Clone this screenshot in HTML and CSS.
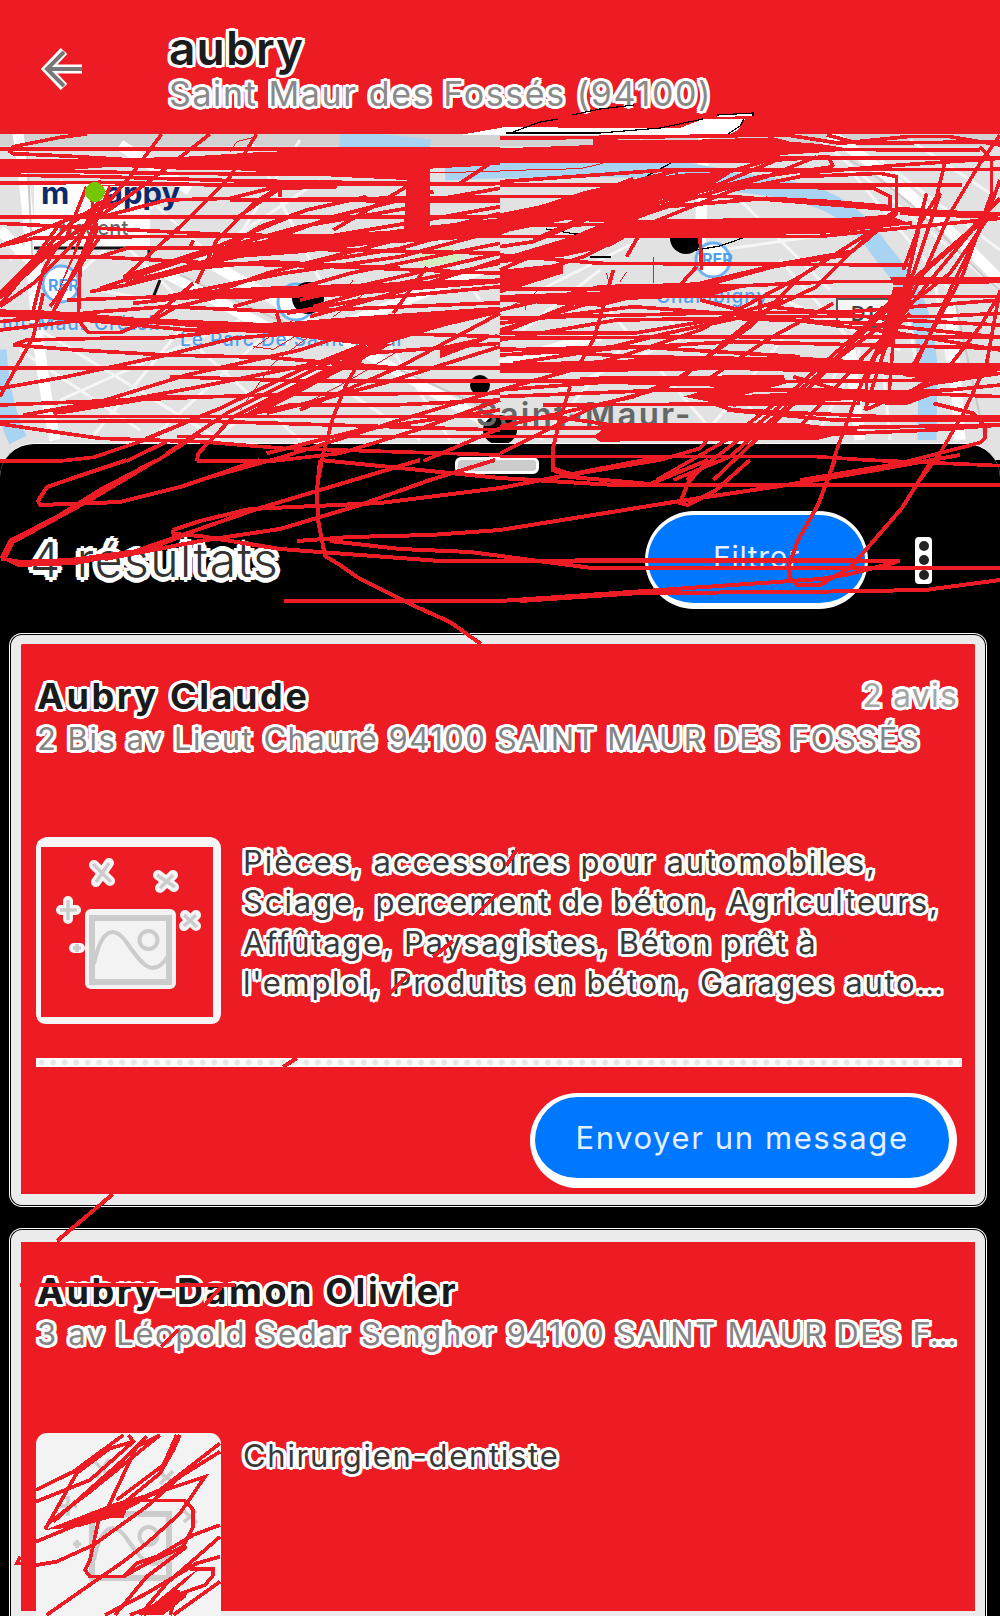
FILE: index.html
```html
<!DOCTYPE html>
<html lang="fr">
<head>
<meta charset="utf-8">
<title>aubry – Saint Maur des Fossés</title>
<link rel="stylesheet" href="styles.css">
</head>
<body>
<div class="screen">
  <header class="topbar">
    <svg class="back" viewBox="0 0 44 44"><path class="back-halo" d="M21 4 4 22 21 40M4 22H39"/><path class="back-line" d="M21 5 4 22 21 39M4 22H39"/></svg>
    <div>
      <h1 class="query halo">aubry</h1>
      <p class="place halo">Saint Maur des Fossés (94100)</p>
    </div>
  </header>

  <svg class="map" viewBox="0 134 1000 326">
    <rect y="134" width="1000" height="326" fill="#e2e2e2"/>
    <rect y="134" width="1000" height="12" fill="#d2d2d2"/>
    <g fill="none" stroke="#f6f6f6" stroke-width="3">
      <path d="M20 350 140 430M40 330 220 440M60 400 240 320M90 440 180 330M150 440 260 340M210 440 330 360M300 440 200 350M10 260 100 180M60 290 160 200M100 290 200 310M60 180 180 300M200 260 320 180M260 300 150 200M250 140 330 300M300 140 230 250M330 380 420 440M380 330 450 440M400 180 480 300M520 300 640 240M510 340 600 270M560 390 700 330M540 440 620 350M600 300 720 440M660 310 780 440M700 440 790 330M740 200 830 290M720 250 860 230M780 260 850 340M760 290 900 350M800 440 870 310M860 350 820 430M890 440 880 330M930 440 905 300M960 440 930 250M1000 250 880 160M1000 200 910 140M850 170 950 290M820 140 1000 290M640 140 700 190"/>
    </g>
    <g fill="none" stroke="#fff" stroke-width="11">
      <path d="M18 134C35 240 30 330 55 440M0 230 70 300M120 145 190 190M160 270 290 340M205 260 500 430M500 365 600 335M704 134 700 250M830 134C900 180 960 240 1000 280M850 350 860 440M960 440 950 300M330 330 480 270"/>
    </g>
    <g fill="none" stroke="#c9c9c9" stroke-width="2"><path d="M850 160C920 200 960 260 1000 290M27 150 33 270M955 300 985 440M180 275 300 330M400 370 490 410"/></g>
    <g fill="none" stroke="#a8d3f2" stroke-width="19">
      <path d="M340 139 430 149M445 171C580 165 690 165 730 182 820 190 850 205 880 250 910 285 925 310 928 370L927 440"/>
      <path d="M-3 350C0 390 8 420 18 440"/>
    </g>
    <path d="M412 258 450 245 465 262 425 266Z" fill="#d4edbe"/>
    <rect x="34" y="184" width="116" height="65" fill="#fff" opacity=".85"/>
    <path d="M34 248H149V258M160 280 151 303" fill="none" stroke="#111" stroke-width="3"/>
    <text class="logo" x="41" y="204">m</text><text class="logo" x="105" y="204">appy</text>
    <text class="resto" x="58" y="235">Nogent</text>
    <g class="rer"><circle cx="61" cy="284" r="18"/><circle cx="296" cy="302" r="18"/><circle cx="713" cy="260" r="17"/></g>
    <text class="station bold" x="48" y="291">RER</text><text class="station bold" x="702" y="265">RER</text>
    <text class="station" x="2" y="330">int-Maur Créteil</text>
    <text class="station" x="180" y="346">Le Parc De Saint-Maur</text>
    <text class="station" x="656" y="303">Champigny</text>
    <g fill="#000"><circle cx="308" cy="298" r="16"/><circle cx="686" cy="238" r="16"/><circle cx="480" cy="385" r="10"/><ellipse cx="500" cy="430" rx="17" ry="15"/></g>
    <rect x="837" y="299" width="56" height="28" fill="#f5f5f5" stroke="#555" stroke-width="2"/>
    <text class="road" x="851" y="321">D145</text>
    <text class="town" x="476" y="426">Saint-Maur-</text>
  </svg>

  <main class="sheet">
    <div class="grip"></div>
    <div class="summary">
      <h2 class="count halo">4 résultats</h2>
      <button class="pill filter">Filtrer</button>
      <div class="more"><i></i><i></i><i></i></div>
    </div>

    <article class="card">
      <div class="card-head"><h3 class="name halo">Aubry Claude</h3><span class="reviews halo">2 avis</span></div>
      <p class="address halo">2 Bis av Lieut Chauré 94100 SAINT MAUR DES FOSSÉS</p>
      <div class="detail">
        <svg class="thumb" viewBox="0 0 185 187">
          <path fill="#f5f5f5" fill-rule="evenodd" d="M10 0H175Q185 2 185 12V177Q184 187 175 187H10Q1 187 0 177V10Q1 2 10 0ZM5 10V180H177V10Z"/>
          <g class="spark-halo"><path d="M58 28 74 44M73 26 60 45M122 38 138 50M137 38 124 51M32 64V82M25 73H40M149 78 160 89M160 78 148 89M38 111H44"/></g>
          <g class="spark"><path d="M57 27 75 45M73 26 60 45M121 38 139 50M137 38 124 51M32 63V83M24 73H41M148 78 161 90M160 78 148 89M37 111H45M41 107V115"/></g>
          <rect x="49" y="72" width="91" height="80" rx="6" fill="#f3f3f3"/>
          <g class="picture"><rect x="56" y="81" width="77" height="64"/><path d="M58 127C65 92 78 87 91 106S117 144 132 119"/><circle cx="112.500" cy="103" r="9"/></g>
        </svg>
        <p class="jobs halo"><span>Pièces, accessoires pour automobiles,</span><span>Sciage, percement de béton, Agriculteurs,</span><span class="tight">Affûtage, Paysagistes, Béton prêt à</span><span class="tight">l'emploi, Produits en béton, Garages auto…</span></p>
      </div>
      <div class="rule"></div>
      <button class="pill message">Envoyer un message</button>
    </article>

    <article class="card last">
      <div class="card-head"><h3 class="name halo">Aubry-Damon Olivier</h3></div>
      <p class="address wide halo">3 av Léopold Sedar Senghor 94100 SAINT MAUR DES F…</p>
      <div class="detail">
        <svg class="thumb" viewBox="0 0 185 187">
          <rect width="185" height="200" rx="11" fill="#f3f3f3"/>
          <g class="spark"><path d="M57 27 75 45M73 26 60 45M121 38 139 50M137 38 124 51M32 63V83M24 73H41M148 78 161 90M160 78 148 89M37 111H45M41 107V115"/></g>
          <g class="picture"><rect x="56" y="81" width="77" height="64"/><path d="M58 127C65 92 78 87 91 106S117 144 132 119"/><circle cx="112.500" cy="103" r="9"/></g>
        </svg>
        <p class="jobs halo"><span class="tight">Chirurgien-dentiste</span></p>
      </div>
    </article>
  </main>

  <!-- Freehand pen strokes drawn over the whole screen -->
  <svg class="ink" viewBox="0 0 1000 1616">
    <path fill="#fff" d="M460 135 505 127 610 128 680 128 703 119 745 119 738 130 728 135Z"/>
    <path fill="#fff" d="M717 115 753 113V116L717 117Z"/>
    <g class="thin-black"><path d="M506 133H600L660 128 703 119M513 132 540 122 558 119M572 115 600 109 634 105M717 115 753 113V116M744 119 740 126 728 134M722 139 706 144M671 163 634 183M573 208 554 218M546 229 575 234H700L754 234 720 246 690 251M590 257H611"/></g>

    <!-- left half of the map -->
    <g transform="translate(0 120) scale(.333333)">
      <path class="fill" d="M0 118 330 116 560 110 800 95 1500 84V135L1290 146 1290 230 1290 350 1210 350 1220 180 1000 170 700 150 560 150 340 140 0 165Z"/>
      <path class="fill" d="M1500 225 1100 230 690 235 690 245 1500 250ZM1500 305 1200 330 870 350 650 380 630 420 900 400 1100 375 1500 350Z"/>
      <path class="fill" d="M1500 475 1100 490 800 500 620 510 470 540 800 535 1000 530 1500 490ZM0 568 150 572 420 594 820 610 1000 595 1500 560V580L1330 620 1130 680 800 640 500 615 300 606 0 590Z"/>
      <path class="fill" d="M160 550 290 260 320 210 270 270ZM720 890 1100 680 1180 670 820 860ZM1320 715 1410 680 1500 640 1320 680Z"/>
      <path d="M260 42 180 52 40 80 30 95 40 101 200 108 400 120M0 88H1500M0 130 340 128 800 115M0 150 500 160 1250 165M0 165 300 170 700 182 1220 190M0 190 300 187 700 196 1500 190M0 292 1500 290M0 310 300 325 700 345 1300 352M0 378 100 355 400 350 1500 350M0 411 300 411 650 430 1000 440 1500 460"/>
      <path d="M485 42 390 170 210 380 100 490 0 560M630 42 440 190 270 310 130 400 0 525M770 42 690 170 540 320 370 475M260 200 200 350 60 480 0 555M330 200 240 420 160 575M270 200 290 330 240 440 235 600 265 638 360 638 450 600 580 490M300 280 170 380 130 450 100 570M330 230 200 320 60 470 0 535M300 350 210 480 150 560M180 310 100 420 0 520M350 250 200 300 0 378"/>
      <path d="M270 300 500 240 690 235 830 200M300 410 380 385 700 383 1500 400M270 515 380 495 580 445 800 425 1200 445M300 505 540 425 700 375 900 320 1250 260M370 470 650 380 920 270 1100 230M380 490 700 400 1000 290 1300 215M200 540 500 530 850 460 1200 410 1500 330M400 550 620 525 800 460 1150 370 1500 280M700 300 840 205 1010 200M590 490 650 360 760 250 840 200V230M650 400 780 320 920 270M570 380 580 360M1000 330 1220 200M800 370 980 350 1220 310 1500 260M860 440 1200 385 1500 300M900 540 1200 470 1500 400M940 560 1150 500 1500 430M460 600 530 560 700 520 1100 500M1180 580 1230 510 1280 440M860 580 1080 540 1500 500M400 480 800 390 1220 330 1500 300M930 590 1250 500 1500 420M700 560 1050 460 1500 370M1300 240 1500 205M1380 190 1500 110"/>
      <path d="M0 605 300 575 500 560 850 575 1500 548M0 630 250 600 560 630 1000 635 1500 650M40 675 80 660 300 655 500 653 700 630 840 610 830 580M40 675 230 690 500 705 800 712 1200 745 1500 745M0 745H1500M0 805 200 770 500 705 700 655 880 640M0 830 100 650 130 520M0 855 250 845 640 830 900 822 1500 820M0 890H1500M0 905 600 903 1500 930M0 912 300 955 600 965 850 985 1500 1005M70 885 300 845 560 765 900 690 1170 600M160 880 600 800 850 750 1100 700 1500 670M180 878 480 830 700 830M510 770 900 783 1500 783M440 955 660 865 900 750 1100 670M500 1000 680 880 960 740 1100 680M720 890 870 855 1180 855 1500 840M800 880 1150 790 1500 680M900 870 1200 740 1500 580M0 1023H180L280 1012 420 965 600 890M380 1023 500 965M470 1023 600 940M530 950H1500M600 1080 850 1010 1200 900 1500 810M590 1024 595 1000 700 890 1000 740M590 1024H810L1020 1000 1250 930 1500 840M800 1000 1080 930 1500 870M1270 1023 1500 925M1100 690 1040 790 1000 890 970 1000 955 1080"/>
      <path class="hair" d="M690 95 710 65 770 50M720 870 820 730 920 655M760 685 880 600M900 860 1050 780 1200 690M1000 590 1120 500M1000 560 1060 480M900 640 820 688 760 680M500 165 1500 155M300 198 1500 195"/>
    </g>

    <!-- right half of the map -->
    <g transform="translate(500 100) scale(.333333)">
      <path class="fill" d="M0 145 280 135 280 118 560 120 820 112 870 125 960 132 1075 150 840 165 780 188 0 190Z"/>
      <path class="fill" d="M0 340 200 300 400 240 560 220 700 215 620 265 480 300 420 340 400 400 330 440 190 470 0 490 0 470 200 430 350 370 200 360 0 400ZM0 510 190 490 190 520 0 580ZM400 360 700 355 1190 355 1235 372 1000 400 600 410 300 405Z"/>
      <path class="fill" d="M0 585 400 572 600 550 760 555 620 590 380 600 300 620 0 605ZM0 790 500 775 900 770 1200 790 1500 790V812L1350 850 1200 825 700 810 0 820Z"/>
      <path class="fill" d="M240 830 850 825 860 850 730 885 1000 870 1300 885 1220 915 1165 915 1050 900 700 920 550 890 650 860 240 850ZM280 1010 330 970 900 970 1075 990 950 1020 300 1025ZM1170 530H1500V550L1180 555ZM1180 560 1130 770 1180 730 1240 560Z"/>
      <path d="M0 115 500 110 860 105 1020 130 1220 110 1350 110 1500 135M0 150 800 148 1440 150M0 180 900 173 1500 174M0 245 500 210 1500 208M0 255H1385M0 290 700 290 1190 330 1500 342M0 375 1235 370M0 410H950L1500 355M0 465 300 490 1230 495M0 568 500 568 1000 545 1500 545M0 590H1500M0 655 600 640 1050 635 1500 600M0 715 700 710 1500 712M0 745 400 770 1000 780M0 765 700 725 1500 745M0 843 800 845 1350 840M0 870 400 840M0 890 500 870 1000 870 1500 890M130 915 1080 910M0 955H200L400 985 1070 990M0 985H900L1500 975M0 1010H800L1300 990 1500 975M650 915 700 930 1150 950 1500 952M680 930 1000 960 1500 960"/>
      <path d="M980 105 1075 130 1500 125M1000 200 985 170 830 180 640 260 400 350 130 460M950 170 800 230 560 300 300 390 0 480M1000 200 780 230 500 300 250 400 0 510M0 440 100 425 400 300 840 170M0 400 400 235M0 360 250 280 540 210M100 420 300 330 500 230M0 550 250 470 450 370 700 270 900 230 1140 220 1190 230V340L1100 420 1040 465 820 500 600 560 300 600 0 690M530 210V250M1190 330 1160 350 900 370M700 260 1120 265 1170 290V320L1000 305 800 295 500 320 350 370M0 700 300 580 600 550 850 490 1050 455M1180 340 1050 460 950 560 780 640 500 700 300 750 40 790M1120 390 900 530 600 690 360 770 0 870M380 470 420 400M600 410 605 510M0 630 300 560 540 555 590 500M340 510 310 620 280 720 240 790M780 600V640L550 830 400 890 0 980M900 530 750 680 500 860 280 920 0 1060M850 600 640 660 400 700 0 700M0 670 400 620 800 650 1300 650 1500 640M0 720 350 660 700 655 1100 670 1500 712M0 750 400 740 900 770M620 840 800 720 1000 610M600 600 800 650 1200 700 1500 750M800 620 1200 660 1500 675"/>
      <path d="M1335 185 1310 290 1260 370 1230 500 1180 720 1165 910M1320 280 1240 520 1150 760 1095 930M1440 140 1475 180V280L1440 380 1390 520 1320 650 1220 830M1500 105 1440 190 1350 340 1280 500 1180 690M1500 295 1400 400 1260 520 1050 720 880 870 680 1020 470 1140M1500 340 1440 370 1280 510 1150 640 960 820 740 1000 560 1140M1460 360 1350 520 1180 650 1020 770 820 970 640 1140M1450 350 1300 530 1140 730 1100 840V920M1500 240 1460 350 1360 550 1240 810M1500 570 1460 790 1390 940 1320 1060 1260 1140M1500 580 1440 680 1340 810 1170 910M1230 520 1190 620 1080 860 1010 1050 985 1140M1230 640 1100 760 900 980M1280 280 1250 400 1210 510M900 220 1200 195 1500 175M1190 325 1450 345M1200 340 1440 350 1500 340M1170 590V700M1095 930 1210 880 1300 850 1500 820M1300 910 1420 940 1455 980V1015L1440 1028 1200 1090 900 1140M0 1070H950L1100 1080 1500 1097M240 1130 160 1105V1040L180 960 210 860M630 990V1010L600 1045 480 1080 180 1130M860 920 690 1070 520 1140M880 830 1050 880 1350 870 1500 855"/>
      <path class="hair" d="M0 212 240 206 310 190M100 585 120 560M380 515 360 545M320 520 330 560M76 600V630M0 635 50 610M460 470V550"/>
    </g>

    <!-- strokes that run onto the sheet -->
    <g>
      <path d="M127 460 82 475 47 487 38 501 40 505 120 502 180 487 260 460M157 460 100 490 60 515 10 541 2 557 18 565 75 563 130 553 185 534 260 508 420 460M157 460 90 500 13 542 4 559 20 562 70 560 145 550 185 535M105 559 200 541 280 529 360 505 430 480 495 460M173 530 200 521 250 509 380 503 500 488 660 457M172 530 174 534 200 536 280 549 440 561 500 561H900M320 460 317 490 318 520 325 556 340 565 357 577 410 604 450 622 481 644M297 541 350 537 430 535 500 530 680 501 780 486 870 471 960 455M330 541 400 549 470 552 592 568H1000M284 601H500L660 590 820 579 850 574 897 562 840 560H575M520 601 640 593 800 592 925 590 1000 580M320 460 500 478 615 485H1000M553 460V470L570 477 650 484 708 460M708 460 688 483 680 503 688 505 716 490 750 460M835 460 818 505 798 540 789 565 790 578 797 585H820L850 568 870 545 902 508 932 460"/>
      <path d="M518 848 506 866M496 895 473 918M453 941 433 957M409 974 389 994M297 1058 283 1067M113 1194 57 1241"/>
      <path d="M20 1285H235M222 1286 205 1305M178 1330 161 1347"/>
      <g transform="translate(0 1180) scale(.333333)">
        <path d="M108 930 220 875 370 765M108 965 270 900 400 785 385 765M135 1048 230 880 330 805 400 785M145 1030 270 935 480 765M160 1025 380 830 440 770M320 990 410 800 480 765M350 960 490 855 530 765M370 970 480 880 520 810 540 765M108 1085 290 1010 480 930 660 790M60 1130 50 1150 110 1155 170 1145 280 1095 440 980 540 890 660 815M300 1000 480 935 615 890 540 1000 440 1090 370 1145 290 1200 140 1305M400 962H555L580 990V1040L550 1100 440 1150 370 1190H270L255 1170 270 1140 300 1000M660 1035 580 1065 470 1130 410 1150 370 1190M660 1070 500 1210 420 1305M660 1130 590 1150 440 1240 315 1305M345 1305 440 1190 560 1100M570 1167H640V1185L615 1215 530 1245 430 1305M660 1205 520 1305M560 1240 390 1305M535 1230 510 1305"/>
        <path class="fill" d="M135 1050 340 970 500 925 380 990 370 1015H330L240 1040ZM420 1305 560 1190 600 1165 530 1230 560 1250 490 1305Z"/>
      </g>
    </g>
    <circle cx="95" cy="192" r="10" fill="#74c600"/>
  </svg>
</div>
</body>
</html>
```
FILE: styles.css
```css
*{box-sizing:border-box;margin:0;padding:0}
body{background:#000;font-family:Inter,"Open Sans",sans-serif}
.screen{position:relative;width:1000px;height:1616px;overflow:hidden;background:#000}
.halo{text-shadow:2px 0 #fff,-2px 0 #fff,0 2px #fff,0 -2px #fff,2px 2px #fff,-2px 2px #fff,2px -2px #fff,-2px -2px #fff,3px 0 #fff,-3px 0 #fff,0 3px #fff,0 -3px #fff,3px 2px #fff,-3px 2px #fff,3px -2px #fff,-3px -2px #fff;white-space:nowrap}

.topbar{display:flex;height:134px;padding:26px 0 0 43px;background:#ed1c24}
.back{width:44px;height:44px;margin:21px 82px 0 0;fill:none;overflow:visible}
.back-halo{stroke:#fff;stroke-width:9}
.back-line{stroke:#777;stroke-width:4}
.query{font-size:46px;line-height:44px;font-weight:600;letter-spacing:1.2px;color:#1c1c1c}
.place{margin-top:4px;font-size:34px;line-height:40px;letter-spacing:1.6px;color:#8a8a8a}

.map{display:block;width:1000px;height:326px}
.logo{font:700 31px Inter,sans-serif;fill:#0b2a6b}
.resto{font:500 20px Inter,sans-serif;fill:#666}
.station{font:500 19px Inter,sans-serif;letter-spacing:1px;fill:#4f9fee}
.bold{font-weight:700;font-size:16px;letter-spacing:0}
.rer{fill:#fff;stroke:#6cb2f2;stroke-width:3}
.road{font:600 20px Inter,sans-serif;fill:#444}
.town{font:600 33px Inter,sans-serif;letter-spacing:2.200px;fill:#666}

.sheet{position:relative;margin-top:-17px;height:1173px;border-top:1px solid #fff;border-radius:34px 34px 0 0;background:#000}
.grip{width:84px;height:17px;margin:13px 0 0 455px;border:3px solid #fff;border-radius:6px;background:#ccc}
.summary{display:flex;align-items:center;height:98px;margin-top:37px;padding-left:30px}
.count{width:615px;font-size:48px;line-height:60px;font-weight:300;letter-spacing:1.5px;color:#333;padding-bottom:1px;text-shadow:3px 0 #fff,-3px 0 #fff,0 3px #fff,0 -3px #fff,3px 3px #fff,-3px 3px #fff,3px -3px #fff,-3px -3px #fff,5px 0 #fff,-5px 0 #fff,0 5px #fff,0 -5px #fff,4px 3px #fff,-4px 3px #fff,4px -3px #fff,-4px -3px #fff}
.pill{display:block;border:solid #fff;background:#07f;color:#e4efff;font-family:inherit;white-space:nowrap}
.filter{width:223px;height:98px;border-width:4px 3px 6px;border-radius:49px;font-size:30px;letter-spacing:.7px;padding-bottom:5px}
.more{display:flex;flex-direction:column;align-items:center;justify-content:space-between;width:17px;height:47px;margin-left:47px;padding:4px 0;border-radius:4px;background:#fff}
.more i{width:10px;height:10px;border-radius:5px;background:#222}

.card{width:974px;height:570px;margin:26px 0 0 11px;padding:31px 0 0 16px;border:solid #ebebeb;border-width:9px 10px 11px 10px;border-radius:11px;background:#ed1c24;box-shadow:0 0 0 1px #000,0 0 0 2px #fff}
.card.last{height:386px;margin-top:25px;padding-top:28px;border-width:12px 10px 5px;border-radius:11px 11px 0 0}
.card-head{display:flex;justify-content:space-between;width:921px;line-height:42px}
.name{font-size:36px;font-weight:650;letter-spacing:2.6px;color:#1a1a1a}
.reviews{font-size:32px;letter-spacing:1.2px;color:#a5a5a5}
.address{margin-top:2px;font-size:31px;line-height:40px;letter-spacing:1.500px;color:#858585}
.address.wide{letter-spacing:1.65px}
.detail{display:flex;margin:78px 0 0 -1px}
.last .detail{margin-top:79px}
.thumb{width:185px;height:187px;margin-right:22px;fill:none;flex:none}
.spark-halo{stroke:#f5f5f5;stroke-width:10;stroke-linecap:round}
.spark{stroke:#ccc;stroke-width:3.500}
.picture{fill:none;stroke:#ccc;stroke-width:6}
.picture circle,.picture path{stroke-width:4}
.jobs{padding-top:5px;font-size:31px;line-height:40.300px;letter-spacing:1.92px;color:#3a3a3a}
.last .jobs{padding-top:3px}
.jobs span{display:block}
.jobs .tight{letter-spacing:1.7px}
.rule{width:926px;height:9px;margin:34px 0 26px -1px;background:radial-gradient(circle,#e6e6e6 2px,#fff 4px) 0 0/11.500px 9px}
.message{width:427px;height:95px;margin-left:493px;border-width:4px 8px 10px 5px;border-radius:48px;font-size:31px;letter-spacing:1.6px}

.ink{position:absolute;left:0;top:0;width:1000px;height:1616px;pointer-events:none;fill:none;stroke:#ed1c24;stroke-width:4;shape-rendering:crispEdges}
.ink g[transform]{stroke-width:11}
.ink .fill{fill:#ed1c24;stroke:none}
.ink .hair{stroke-width:3}
.ink>path,.ink>circle{stroke:none}
.thin-black{stroke:#000;stroke-width:1.200}
```
